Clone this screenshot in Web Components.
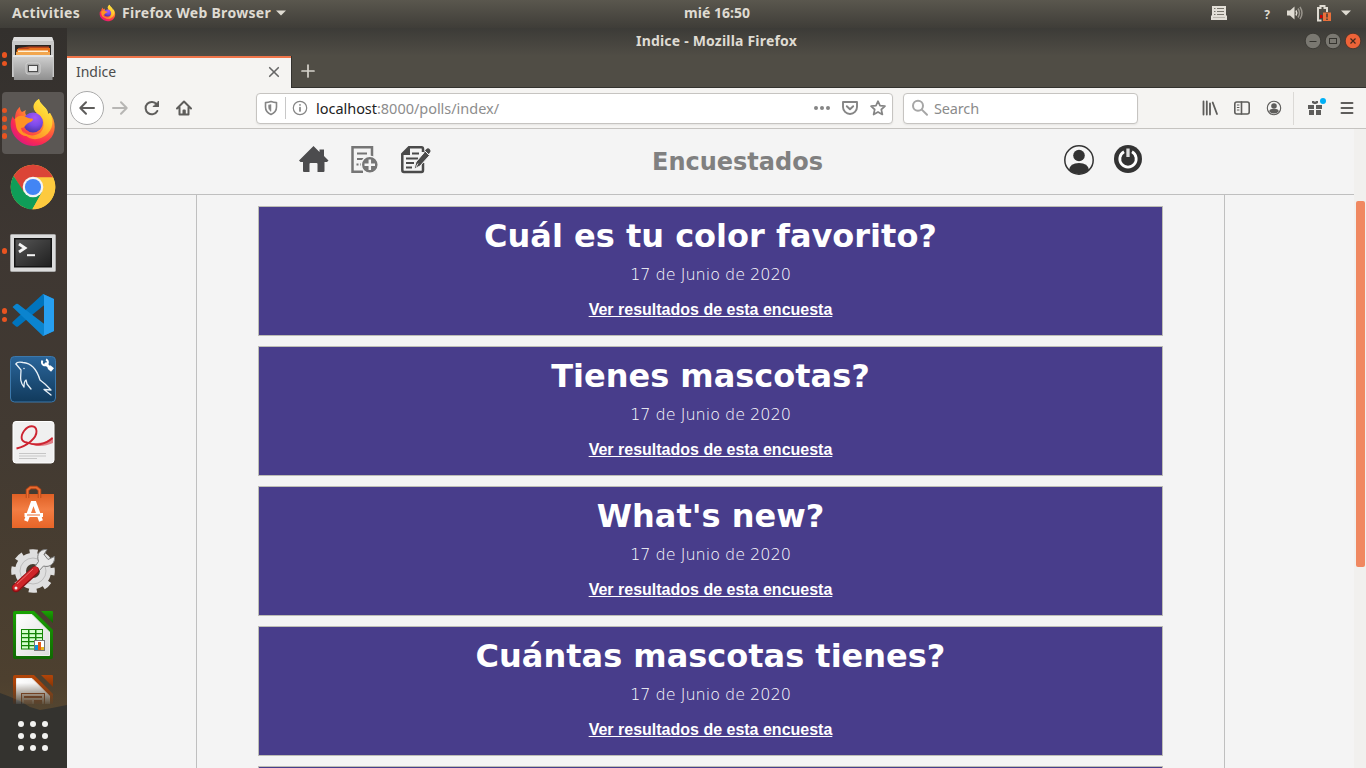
<!DOCTYPE html>
<html lang="es">
<head>
<meta charset="utf-8">
<title>Indice</title>
<style>
html,body{margin:0;height:100%;overflow:hidden}
body{font-family:"Noto Sans","Open Sans",sans-serif;background:#3c3b37}
</style>
</head>
<body>
<desktop-shell>
  <top-panel slot="panel"></top-panel>
  <app-dock slot="dock"></app-dock>
  <browser-window slot="window">
    <polls-page>
      <poll-card date="17 de Junio de 2020">Cuál es tu color favorito?</poll-card>
      <poll-card date="17 de Junio de 2020">Tienes mascotas?</poll-card>
      <poll-card date="17 de Junio de 2020">What's new?</poll-card>
      <poll-card date="17 de Junio de 2020">Cuántas mascotas tienes?</poll-card>
      <poll-card></poll-card>
    </polls-page>
  </browser-window>
</desktop-shell>
<script>
const define = (name, html, setup) => {
  const tpl = document.createElement('template');
  tpl.innerHTML = html;
  customElements.define(name, class extends HTMLElement {
    connectedCallback() {
      if (this.shadowRoot) return;
      this.attachShadow({mode: 'open'}).append(tpl.content.cloneNode(true));
      if (setup) setup(this, this.shadowRoot);
    }
  });
};

const FOX = `<svg viewBox="0 0 48 48"><defs>
<radialGradient id="a" cx=".78" cy=".12" r="1"><stop offset="0" stop-color="#fff44f"/><stop offset=".3" stop-color="#ffb52e"/><stop offset=".58" stop-color="#ff6a36"/><stop offset=".82" stop-color="#fa2a52"/><stop offset="1" stop-color="#d91784"/></radialGradient>
<radialGradient id="b" cx=".6" cy=".25" r=".8"><stop offset="0" stop-color="#a657f5"/><stop offset=".5" stop-color="#7a4bea"/><stop offset="1" stop-color="#4a32a0"/></radialGradient>
<linearGradient id="c" x1="1" y1="0" x2=".4" y2="1"><stop offset="0" stop-color="#fff251"/><stop offset=".5" stop-color="#ffcb2f"/><stop offset="1" stop-color="#ff8c28"/></linearGradient></defs>
<path fill="url(#a)" d="M11 7C11 10 12 11 13 12L17 10C16 12 16 13 17 15L28 13C23 9 25 2 30-1C31 4 35 5 38 10C39 12 39 13 39 14L41 13C47 21 48 33 40 40C31 48 17 48 8 39C1 32 0 22 4 16C4 18 5 19 6 19C6 13 8 9 11 7Z"/>
<circle cx="24" cy="22.500" r="10" fill="url(#b)"/>
<path fill="url(#c)" d="M30-1C23 3 23 9 28 13C36 17 37 27 31 33C25 37 18 36 14 31C17 38 24 41 32 38C43 33 46 23 41 13L39 14C38 7 31 5 30-1Z"/>
<path fill="#ff9224" d="M6 19C9 15 13 15 17 17C20 19 23 18 24 19C24 22 20 22 18 24C16 25 16 28 12 28C13 33 18 36 23 35C16 39 8 33 7 26Z"/></svg>`;

const lo = (c1, c2, inner) => `<svg viewBox="0 0 48 48"><defs><linearGradient id="g" x2="0" y2="1"><stop stop-color="${c1}"/><stop offset="1" stop-color="${c2}"/></linearGradient><linearGradient id="w" y2="1"><stop offset="0" stop-color="#fff"/><stop offset="1" stop-color="#dcdcdc"/></linearGradient></defs>
<path fill="url(#g)" d="M5-1H25L44 18V45Q44 47 42 47H6Q4 47 4 45V1Q4-1 6-1Z"/><path fill="url(#g)" d="M32-1H43Q44-1 44 0V11Z"/><path fill="url(#w)" stroke="#eee" d="M7.500 2.500H23L40.500 20V43.500H7.500Z"/>${inner}</svg>`;

const stroke = (body, w = 2) => `<svg viewBox="0 0 16 16" fill="none" stroke="currentColor" stroke-width="${w}" stroke-linecap="round" stroke-linejoin="round">${body}</svg>`;

const ICONS = {
firefox: FOX,
files: `<svg viewBox="0 0 48 48"><defs><linearGradient id="a" y2="1" x2="0"><stop stop-color="#d2d2d2"/><stop offset="1" stop-color="#8f8f8f"/></linearGradient></defs>
<path fill="#c9c9c9" d="M5 1H43L45 6V41H3V6Z"/><path fill="#ddd" d="M5 1H43L44.500 5H3.500Z"/><path fill="#2a2725" d="M6 9H42V20H6Z"/><path fill="#b8451d" d="M9 12L20 10.500H40V19H9Z"/><path fill="#e8731e" d="M8 13H19L21 12H41V20H7Z"/><path fill="#fff2d6" d="M9 14.500H39V16H9Z"/><path fill="#f2a64e" d="M7 16H41V20H7Z"/><path fill="url(#a)" d="M4 19H44L43.500 44H5Z"/><path fill="#e5e5e5" d="M4 19H44V21H4Z"/><rect x="17" y="27" width="14" height="11" rx="2" fill="#a5a5a5" stroke="#d3d3d3"/><rect x="19.500" y="29.500" width="9" height="6" fill="#eee" stroke="#4c4c4c"/></svg>`,
chrome: `<svg viewBox="0 0 48 48"><g transform="translate(24 23)"><circle r="22.300" fill="#fdca3e"/><path fill="#db4437" d="M-19.400-11A22.300 22.300 0 0 1 20.100-9.600H0L-10 5Z"/><path fill="#0f9d58" d="M-19.400-11A22.300 22.300 0 0 0-.6 22.300L9.100 5 0 10-9 5Z"/><path fill="#fdca3e" d="M0-9.600H20.100A22.300 22.300 0 0 1-.6 22.300L9 5Z"/><circle r="10.300" fill="#f4f4f4"/><circle r="8.100" fill="#4285f4"/></g></svg>`,
terminal: `<svg viewBox="0 0 48 48"><defs><linearGradient id="a" y2="1"><stop stop-color="#555"/><stop offset="1" stop-color="#202020"/></linearGradient></defs><rect x="1.500" y="6.500" width="45" height="37" rx="1" fill="#dcdcdc" stroke="#aaa"/><rect x="5" y="10" width="38" height="29.500" fill="#151515"/><rect x="6.500" y="11.500" width="35" height="26.500" fill="url(#a)"/><path d="M10 16L16 20 10 24" fill="none" stroke="#f5f5f5" stroke-width="2.800"/><path d="M18 27.200H26" stroke="#f5f5f5" stroke-width="2"/></svg>`,
vscode: `<svg viewBox="0 0 48 48"><path fill="#0074bd" d="M34 2L45 7 34 14 9 34.500Q8 35 7 34.500L3.500 31.500Q3 31 3.500 30Z"/><path fill="#0b84cf" d="M3.500 15L7 12Q8 11.500 9 12L34 31 45 39 34 44Z"/><path fill="#279ff0" d="M34 2L45 7V39L34 44Q35 43 35 41V5Q35 3 34 2Z"/></svg>`,
mysql: `<svg viewBox="0 0 48 48"><defs><linearGradient id="a" y2="1" x2="0"><stop stop-color="#2a659a"/><stop offset="1" stop-color="#113a5c"/></linearGradient></defs><rect x="1.500" y=".5" width="45" height="45.500" rx="4" fill="url(#a)" stroke="#3c78ab"/><g fill="none" stroke="#e8f0f6" stroke-width="1.300" stroke-linecap="round" stroke-linejoin="round"><path d="M7 8Q8 5.500 14 6.500C22 7 28 14 31 24L36 28 42 34 35 33.500 42 39"/><path d="M7 8L12 14C12 20 10 25 15 31C15 27 15 25 17 24L18 28 22 33"/></g><circle cx="15" cy="12.500" r=".7" fill="#fff"/><path d="M36 7L41 12" stroke="#fff" stroke-width="3"/><path d="M33.500 4.500A3 3 0 1 0 37 3.500" fill="none" stroke="#fff" stroke-width="2"/><path d="M40 11L43.500 14" stroke="#fff" stroke-width="4.500"/></svg>`,
pdf: `<svg viewBox="0 0 48 48"><rect x="4" y="1.500" width="41" height="41.500" rx="3" fill="#f0f0f0" stroke="#fff" stroke-width="1"/><path d="M17 22C26 24 36 24 44 17V23C33 28 24 26 17 22Z" fill="#e28088"/><path d="M7.500 28.500C18 26 28 18 27.500 11C27 5 20 4.500 15 11C11 17 12 22 18 22.500C26 26 36 25 43.500 18" fill="none" stroke="#cd2431" stroke-width="1.900"/><path d="M10 33.500H37M10 36H37M10 38.500H28" stroke="#c6c6c6" stroke-width="1"/></svg>`,
software: `<svg viewBox="0 0 48 48"><defs><linearGradient id="a" y2="1" x2="0"><stop stop-color="#df6025"/><stop offset=".45" stop-color="#f27d43"/><stop offset="1" stop-color="#e86528"/></linearGradient></defs><path fill="url(#a)" d="M3 10H45V44H3Z"/><path d="M18.500 14V6L21.500 3.500H27.500L30.500 6V14" fill="none" stroke="#b74718" stroke-width="3.500"/><path d="M18.500 14V6L21.500 3.500H27.500L30.500 6V14" fill="none" stroke="#ea6d32" stroke-width="1.700"/><path fill="none" stroke="#fff" stroke-width="4" d="M17 37L23.500 19H25.500L32 37"/><path stroke="#fff" stroke-width="4" d="M15.500 31H34"/><path stroke="#e96e34" d="M18 31H31"/></svg>`,
settings: `<svg viewBox="0 0 48 48"><circle cx="24" cy="23" r="12.500" fill="none" stroke="#dfdfdf" stroke-width="11"/><circle cx="24" cy="23" r="19.300" fill="none" stroke="#dfdfdf" stroke-width="5" stroke-dasharray="8 7.158" stroke-dashoffset="4"/><circle cx="24" cy="23" r="13" fill="none" stroke="#bdbdbd"/><path d="M25 20L29.500 13.500C27 6 31 1 38 1.500L35 6.500 39 11.500 45.500 8.500C46.500 15 41 20 34.500 18L29 24Z" fill="#e8e8e8" stroke="#7c7c7c" stroke-width="1"/><path d="M7 40L26 22.500" stroke="#8c1015" stroke-width="8.500" stroke-linecap="round"/><path d="M7 39.500L26 22" stroke="#cf2529" stroke-width="6.500" stroke-linecap="round"/><path d="M8 36L24 21" stroke="#ed6e6e" stroke-width="1"/><circle cx="7" cy="40" r="1.500" fill="#eee"/></svg>`,
calc: lo('#19a303', '#106802', `<rect x="12" y="17" width="22" height="20.500" fill="#158407"/><g fill="#d4ffcd"><path d="M13 18H19V21H13ZM20.500 18H26V21H20.500ZM27.500 18H33V21H27.500ZM13 22.300H19V25H13ZM20.500 22.300H26V25H20.500ZM27.500 22.300H33V25H27.500ZM13 26.300H19V29H13ZM20.500 26.300H26V29H20.500ZM27.500 26.300H33V29H27.500ZM13 30.300H19V33H13ZM20.500 30.300H26V33H20.500ZM13 34.300H19V36.500H13ZM20.500 34.300H26V36.500H20.500Z"/></g><rect x="25.500" y="28.500" width="10" height="10" fill="#fff" stroke="#777"/><path fill="#0c93dc" d="M26 33H29V38H26Z"/><path fill="#e45b18" d="M29 30H32V38H29Z"/><path fill="#e5b31d" d="M32 35H35V38H32Z"/>`),
impress: lo('#b14509', '#8a3503', `<rect x="12.500" y="17.500" width="23" height="18" fill="#e6d7cc" stroke="#904018"/><path stroke="#904018" stroke-width="2" d="M15 21H33"/><path stroke="#904018" d="M15 25H23M15 27H23"/><path fill="#904018" d="M25 24H33V31H25Z"/>`),
grid: `<svg viewBox="0 0 48 48" fill="#f2f2f0"><circle cx="12" cy="12" r="3"/><circle cx="24" cy="12" r="3"/><circle cx="36" cy="12" r="3"/><circle cx="12" cy="24" r="3"/><circle cx="24" cy="24" r="3"/><circle cx="36" cy="24" r="3"/><circle cx="12" cy="36" r="3"/><circle cx="24" cy="36" r="3"/><circle cx="36" cy="36" r="3"/></svg>`,
caret: `<svg viewBox="0 0 10 6"><path d="M0 .5H10L5 5.500Z" fill="currentColor"/></svg>`,
list: `<svg viewBox="0 0 16 14"><path d="M1 0H15V9L16 10V14H0V10L1 9Z" fill="#e3dfd7"/><path d="M3 2.500H4.500M6 2.500H13M3 5.500H4.500M6 5.500H13M3 8.500H4.500M6 8.500H13" stroke="#77746b"/><path d="M2 11.500H14" stroke="#bbb7ae"/></svg>`,
sound: `<svg viewBox="0 0 16 14" fill="none"><path d="M0 4.500H3L7.500 .5V13.500L3 9.500H0Z" fill="#dfdbd2"/><path d="M9 4.500Q10.500 7 9 9.500" stroke="#dfdbd2" stroke-width="1.500"/><path d="M11 2.500Q14 7 11 11.500M13 .8Q17 7 13 13.200" stroke="#99958c" stroke-width="1.500"/></svg>`,
battery: `<svg viewBox="0 0 16 16"><path d="M5.500 15.500H2V3H4.500V1H8.500V3H11V7" fill="none" stroke="#dfdbd2" stroke-width="2"/><rect x="4" y="10" width="2.500" height="3" fill="#c00"/><rect x="7" y="7.500" width="8" height="8.500" fill="#e9703b"/><path d="M11 8.500V12.500M11 13.500V15" stroke="#4a4039" stroke-width="1.600"/></svg>`,
winmin: `<svg viewBox="0 0 16 16"><circle cx="8" cy="8" r="7.800" fill="#7a7871" stroke="#35342f" stroke-width=".8"/><path d="M4.500 8.500H11.500" stroke="#35342f"/></svg>`,
winmax: `<svg viewBox="0 0 16 16"><circle cx="8" cy="8" r="7.800" fill="#7a7871" stroke="#35342f" stroke-width=".8"/><rect x="4.500" y="5.500" width="7" height="5" fill="none" stroke="#35342f"/></svg>`,
winclose: `<svg viewBox="0 0 16 16"><circle cx="8" cy="8" r="7.800" fill="#ee6338" stroke="#3d302a" stroke-width=".8"/><path d="M5.500 5.500L10.500 10.500M10.500 5.500L5.500 10.500" stroke="#44291d" stroke-width="1.200"/></svg>`,
close: stroke('<path d="M3.700 3.700L12.300 12.300M12.300 3.700L3.700 12.300"/>', 1.6),
plus: stroke('<path d="M8 2V14M2 8H14"/>', 1.7),
back: stroke('<path d="M15 8H1.500M7 2.300L1.300 8L7 13.700"/>'),
forward: stroke('<path d="M1 8H14.500M9 2.300L14.700 8L9 13.700"/>'),
reload: stroke('<path d="M13.300 11A6.200 6.200 0 1 1 12.700 4.300L14 6"/><path d="M14.500 1.500V6.500H9.500Z" fill="currentColor" stroke-width="1"/>'),
home: stroke('<path d="M1 8.500L8 1.500L15 8.500M3.500 7.500V14.500H12.500V7.500"/><path d="M7.500 14V10.500H8.800V14"/>'),
shield: stroke('<path d="M8 1.500C6 2.300 4 2.600 2.500 2.600V7C2.500 10.500 4.500 13 8 14.500C11.500 13 13.500 10.500 13.500 7V2.600C12 2.600 10 2.300 8 1.500Z"/><path d="M8 4.800V11.400C6.500 10.500 5.600 9 5.600 7V5.200Z" fill="currentColor" stroke-width=".5"/>', 1.6),
info: stroke('<circle cx="8" cy="8" r="6.700" stroke-width="1.200"/><path d="M8 7.500V11M8 4.800V5" stroke-width="1.700"/>'),
dots: `<svg viewBox="0 0 16 16" fill="currentColor"><circle cx="2" cy="8" r="2"/><circle cx="8" cy="8" r="2"/><circle cx="14" cy="8" r="2"/></svg>`,
pocket: stroke('<path d="M1 2H15V7A7 7 0 0 1 1 7Z"/><path d="M4.800 6.200L8 9.300L11.200 6.200"/>', 1.9),
star: stroke('<path d="M8 1.200L10 5.700L15 6.200L11.300 9.500L12.400 14.500L8 11.900L3.600 14.500L4.700 9.500L1 6.200L6 5.700Z"/>', 1.7),
search: stroke('<circle cx="6" cy="5.800" r="5"/><path d="M9.800 9.600L15 14.800"/>'),
library: stroke('<path d="M1.500 1.500V14.500M4.800 1.500V14.500M8 3.500V14.500M10.700 2.500L15 14"/>', 1.8),
sidebar: stroke('<rect x=".8" y="2" width="14.400" height="12" rx="2"/><path d="M7.500 2V14"/><path d="M3.300 5H5M3.300 7.500H5M3.300 10H5" stroke-width="1"/>', 1.6),
account: stroke('<circle cx="8" cy="8" r="6.700" stroke-width="1.100"/><circle cx="8" cy="6" r="2.800" fill="currentColor" stroke="none"/><path d="M3.300 11.500Q3.300 9 6 9H10Q12.700 9 12.700 11.500A5.500 4 0 0 1 3.300 11.500Z" fill="currentColor" stroke="none"/>'),
gift: `<svg viewBox="0 0 16 16" fill="currentColor"><path d="M1 5H7V9H1ZM9 5H15V9H9ZM2 10H7V15H2ZM9 10H14V15H9Z"/><path d="M5 1H7L8 2L9 1H11V3L9 4H7L5 3Z"/></svg>`,
menu: stroke('<path d="M2.500 3H13.500M2.500 8H13.500M2.500 13H13.500"/>', 1.9),
pagehome: `<svg viewBox="0 0 30 28" fill="#4c4c4e"><path d="M0 14.500L14.500 0L20.500 6V3.500H25V10L29.500 14.500L28 16H25.500V25Q25.500 26 24.500 26H18.500V18Q18.500 17 17.500 17H11.500Q10.500 17 10.500 18V26H5Q4 26 4 25V16H1.500Z"/></svg>`,
adddoc: `<svg viewBox="0 0 28 28"><path fill="none" stroke="#757575" stroke-width="2.500" d="M12 25.700H1.500V1.300H21V11"/><path stroke="#757575" stroke-width="2" d="M6 7.500H16M6 13H13M9 18.500H11M5.500 18.500H7.500"/><circle cx="18.800" cy="18.800" r="8.500" fill="#757575" stroke="#f4f4f4" stroke-width="1.500"/><path stroke="#f4f4f4" stroke-width="2.500" d="M18.800 13.500V24M13.500 18.800H24"/></svg>`,
editdoc: `<svg viewBox="0 0 30 28"><path d="M22 6V3Q22 1.300 20.500 1.300H8L1.300 8V24Q1.300 26 3 26H20.500Q22 26 22 24V17" fill="none" stroke="#4a4a4a" stroke-width="2.500"/><path d="M0 9L9 0V9Z" fill="#4a4a4a"/><path d="M11 7.500H18M5 12.500H17M5 17H13M5 21.500H11" stroke="#4a4a4a" stroke-width="2"/><path d="M24 5.500L28.500 9.500L19 20L13 23L15 16Z" fill="#4a4a4a" stroke="#f4f4f4"/><path d="M26 6L27 5" stroke="#4a4a4a" stroke-width="5" stroke-linecap="round"/><path d="M24 5L28 9" stroke="#f4f4f4" stroke-width="1"/><path d="M15 21L17 17.500" stroke="#ddd"/></svg>`,
user: `<svg viewBox="0 0 30 30"><defs><clipPath id="p"><circle cx="15" cy="15" r="14"/></clipPath></defs><circle cx="15" cy="15" r="14.200" fill="#f6f6f6" stroke="#333" stroke-width="1.500"/><circle cx="15" cy="10.500" r="5.800" fill="#333"/><path clip-path="url(#p)" d="M5 30V25Q6 18 15 18T25 25V30Z" fill="#333"/></svg>`,
power: `<svg viewBox="0 0 28 28"><circle cx="14" cy="14" r="14" fill="#333"/><path d="M10 6.800A8.200 8.200 0 1 0 18 6.800" fill="none" stroke="#fff" stroke-width="2.800"/><path d="M14 3.500V12" stroke="#ddd" stroke-width="3.300"/></svg>`
};

define('ui-icon', `<style>:host{display:block;flex:none;width:16px;height:16px}svg{display:block;width:100%;height:100%;overflow:visible}</style>`,
  (el, root) => {
    root.append(document.createRange().createContextualFragment(ICONS[el.getAttribute('name')]));
  });

/* Spreads its letters so that the line is as wide as the "width" attribute says. */
define('fit-text', `<style>:host{display:block;flex:none;white-space:pre}span{display:inline-block}</style><span><slot></slot></span>`,
  (el, root) => {
    const want = +el.getAttribute('width'), span = root.querySelector('span');
    const n = el.textContent.length;
    span.style.letterSpacing = ((want - span.getBoundingClientRect().width) / n) + 'px';
    el.style.width = want + 'px';
  });

define('desktop-shell', `<style>
:host{display:grid;width:1366px;height:768px;grid-template:28px 740px / 67px 1299px;overflow:hidden}
slot[name=panel]{display:block;grid-column:1/3}
slot[name=dock],slot[name=window]{display:block;min-width:0;min-height:0}
</style><slot name="panel"></slot><slot name="dock"></slot><slot name="window"></slot>`);

define('top-panel', `<style>
:host{display:grid;grid-template-columns:684px 66px 1fr;align-items:center;height:28px;padding-bottom:2px;box-sizing:border-box;background:linear-gradient(#5a574e,#3f3d38);color:#dfdbd2;font:bold 14px/20px "Noto Sans",sans-serif}
.l,.r{display:flex;align-items:center}
.l{padding-left:12px}.fox{width:17px;height:17px;margin:0 5px 0 19px}
ui-icon[name=caret]{width:10px;height:6px}.l ui-icon[name=caret]{margin-left:5px}
.l fit-text:nth-of-type(2){margin-left:1px}
.r{justify-content:flex-end;padding-right:15px}
.q{width:10px;text-align:center;font-size:12px;margin:3px 15px 0 35px}
.r [name=sound]{height:14px;margin-right:13px}.r [name=list]{height:14px}.r [name=battery]{margin-right:9px}
</style>
<div class="l"><fit-text width="68">Activities</fit-text><ui-icon class="fox" name="firefox"></ui-icon><fit-text width="149">Firefox Web Browser</fit-text><ui-icon name="caret"></ui-icon></div>
<fit-text width="66">mié 16:50</fit-text>
<div class="r"><ui-icon name="list"></ui-icon><span class="q">?</span><ui-icon name="sound"></ui-icon><ui-icon name="battery"></ui-icon><ui-icon name="caret"></ui-icon></div>`);

define('dock-item', `<style>
:host{display:flex;align-items:center;flex:none;width:67px;height:64px;box-sizing:border-box;position:relative}
:host([active])::before{content:"";position:absolute;left:2px;top:0;width:62px;height:62px;border-radius:4px;background:#5b5754}
.dots{width:9px;display:flex;flex-direction:column;align-items:center;gap:3px;position:relative;top:-1px}
i{width:5.500px;height:5.500px;border-radius:50%;background:#e95420}
ui-icon{width:48px;height:48px;position:relative}
</style><div class="dots"></div><ui-icon name="grid"></ui-icon>`,
  (el, root) => {
    const icon = document.createElement('ui-icon');
    icon.setAttribute('name', el.getAttribute('icon'));
    root.querySelector('ui-icon').replaceWith(icon);
    root.querySelector('.dots').innerHTML = '<i></i>'.repeat(+el.getAttribute('windows') || 0);
  });

define('app-dock', `<style>
:host{display:flex;flex-direction:column;height:740px;position:relative;background:linear-gradient(#33302d,#3e3732 30%,#423a32 55%,#4d402f 88%,#554630 93%)}
.land{position:absolute;left:0;bottom:0;width:67px;height:80px}
.apps{height:676px;overflow:hidden;position:relative;-webkit-mask:linear-gradient(#000 655px,transparent 678px);mask:linear-gradient(#000 655px,transparent 678px)}
</style>
<svg class="land" viewBox="0 0 67 80"><path fill="#34332f" d="M0 5L8 8 20 13 30 19 40 22 52 20 67 17V80H0Z"/></svg>
<div class="apps">
<dock-item icon="files" windows="2"></dock-item><dock-item icon="firefox" windows="4" active></dock-item><dock-item icon="chrome"></dock-item><dock-item icon="terminal" windows="1"></dock-item><dock-item icon="vscode" windows="2"></dock-item><dock-item icon="mysql"></dock-item><dock-item icon="pdf"></dock-item><dock-item icon="software"></dock-item><dock-item icon="settings"></dock-item><dock-item icon="calc"></dock-item><dock-item icon="impress"></dock-item>
</div><dock-item icon="grid"></dock-item>`);

define('title-bar', `<style>
:host{display:grid;grid-template-columns:1fr 161px 1fr;align-items:center;height:28px;padding-bottom:2px;box-sizing:border-box;color:#dfdbd2;font:bold 14px/20px "Noto Sans",sans-serif}
.b{display:flex;gap:4px;justify-content:flex-end;padding-right:5px}
</style><span></span><fit-text width="161">Indice - Mozilla Firefox</fit-text><div class="b"><ui-icon name="winmin"></ui-icon><ui-icon name="winmax"></ui-icon><ui-icon name="winclose"></ui-icon></div>`);

define('tab-strip', `<style>
:host{display:flex;height:32px}
.tab{width:224px;box-sizing:border-box;border-top:2px solid #f0754a;background:#f5f4f2;color:#4c4c4c;display:flex;align-items:center;justify-content:space-between;padding:0 9px 2px;font:14px/20px "Noto Sans",sans-serif}
.rest{flex:1;border-left:1px solid #33322e;border-bottom:1px solid #33322e;box-sizing:border-box;display:flex;align-items:center;padding:0 0 1px 8px;color:#d6d3cb}
</style><div class="tab"><fit-text width="40">Indice</fit-text><ui-icon name="close" style="color:#666"></ui-icon></div><div class="rest"><ui-icon name="plus"></ui-icon></div>`);

define('nav-bar', `<style>
:host{display:flex;align-items:center;height:41px;box-sizing:border-box;background:#f5f4f2;border-bottom:1px solid #c5c3c0;color:#5e5d5b;font:14.500px/20px "Noto Sans",sans-serif}
.back{width:34px;height:34px;box-sizing:border-box;border:1px solid #aaa;border-radius:50%;background:#fff;display:grid;place-items:center;margin-left:3px}
.nav{display:flex;gap:16px;margin-left:8px}
.box{height:31px;box-sizing:border-box;border:1px solid #c6c4c1;border-radius:4px;background:#fff;display:flex;align-items:center;box-shadow:0 1px 2px #0001;color:#858585}
.url{width:637px;margin-left:64px;padding:0 6px}.url hr{width:1px;height:22px;border:0;background:#c8c8c8;margin:0 6px 0 6px}
.url fit-text{margin-left:8px;color:#8d8d8d}.url b{font-weight:400;color:#222}
.act{display:flex;gap:12px;margin-left:auto}
.srch{width:235px;margin-left:10px;padding:0 8px;gap:6px;color:#a6a6a6}.srch fit-text{color:#8b8b8b}
.tools{display:flex;gap:16px;margin-left:auto;align-items:center}
.tools hr{width:1px;height:33px;border:0;background:#dbd9d6;margin:0 -3px 0 -5px}
.gift{position:relative}.gift i{position:absolute;left:13px;top:-2px;width:6px;height:6px;border-radius:50%;background:#00b0f6}
.tools{padding-right:11px}
</style>
<div class="back"><ui-icon name="back"></ui-icon></div>
<div class="nav"><ui-icon name="forward" style="color:#b7b6b4"></ui-icon><ui-icon name="reload"></ui-icon><ui-icon name="home"></ui-icon></div>
<div class="box url"><ui-icon name="shield"></ui-icon><hr><ui-icon name="info"></ui-icon><fit-text width="183"><b>localhost</b>:8000/polls/index/</fit-text><div class="act"><ui-icon name="dots"></ui-icon><ui-icon name="pocket"></ui-icon><ui-icon name="star"></ui-icon></div></div>
<div class="box srch"><ui-icon name="search"></ui-icon><fit-text width="45">Search</fit-text></div>
<div class="tools"><ui-icon name="library"></ui-icon><ui-icon name="sidebar"></ui-icon><ui-icon name="account"></ui-icon><hr><div class="gift"><ui-icon name="gift"></ui-icon><i></i></div><ui-icon name="menu"></ui-icon></div>`);

define('browser-window', `<style>
:host{display:flex;flex-direction:column;height:740px;background:linear-gradient(#3c3b37,#504d45 28px,#504d45);overflow:hidden}
.view{display:flex;flex:1;min-height:0;background:#f4f4f4}
.bar{width:12px;box-sizing:border-box;padding:72px 1px 0 2px;background:#f1f0ee}
.thumb{height:366px;border-radius:2px;background:#f08861}
.page{flex:1;min-width:0;overflow:hidden}
</style><title-bar></title-bar><tab-strip></tab-strip><nav-bar></nav-bar>
<div class="view"><div class="page"><slot></slot></div><div class="bar"><div class="thumb"></div></div></div>`);

define('polls-header', `<style>
:host{display:flex;height:66px;box-sizing:border-box;border-bottom:1px solid #bfbfbf;background:#f4f4f4;align-items:flex-start;color:#808080;font:bold 24px/28px "DejaVu Sans",sans-serif}
.i{display:flex;padding:17px 0 0 232px;width:353px}
.u{display:flex;gap:20px;margin:16px 0 0 241px}
fit-text{margin-top:19px}
</style><div class="i"><ui-icon name="pagehome" style="width:30px;height:28px"></ui-icon><ui-icon name="adddoc" style="width:28px;height:28px;margin-left:22px"></ui-icon><ui-icon name="editdoc" style="width:30px;height:28px;margin-left:22px"></ui-icon></div>
<fit-text width="171">Encuestados</fit-text>
<div class="u"><ui-icon name="user" style="width:30px;height:30px"></ui-icon><ui-icon name="power" style="width:28px;height:28px"></ui-icon></div>`);

define('poll-card', `<style>
:host{display:flex;flex-direction:column;align-items:center;flex:none;width:905px;height:130px;box-sizing:border-box;border:1px solid #bdbdb5;background:#483d8b;color:#fff;text-align:center}
h2{margin:10px 0 0;font:bold 32px/38px "DejaVu Sans",sans-serif}
time{margin-top:10px;font:200 16px/20px "DejaVu Sans Light","DejaVu Sans",sans-serif;white-space:pre}
a{margin-top:16px;font:bold 16px/18px "Liberation Sans",sans-serif;color:#fff;text-decoration:underline}
</style><h2><slot></slot></h2><time></time><a>Ver resultados de esta encuesta</a>`,
  (el, root) => {
    const d = el.getAttribute('date');
    if (d) root.querySelector('time').textContent = d;
    else root.querySelectorAll('h2,time,a').forEach(n => n.remove());
  });

define('polls-page', `<style>
:host{display:block}
main{width:1029px;height:573px;box-sizing:border-box;margin-left:129px;border:solid #bfbfbf;border-width:0 1px;padding:11px 0 0 61px;display:flex;flex-direction:column;gap:10px;overflow:hidden}
</style><polls-header></polls-header><main><slot></slot></main>`);
</script>
</body>
</html>
